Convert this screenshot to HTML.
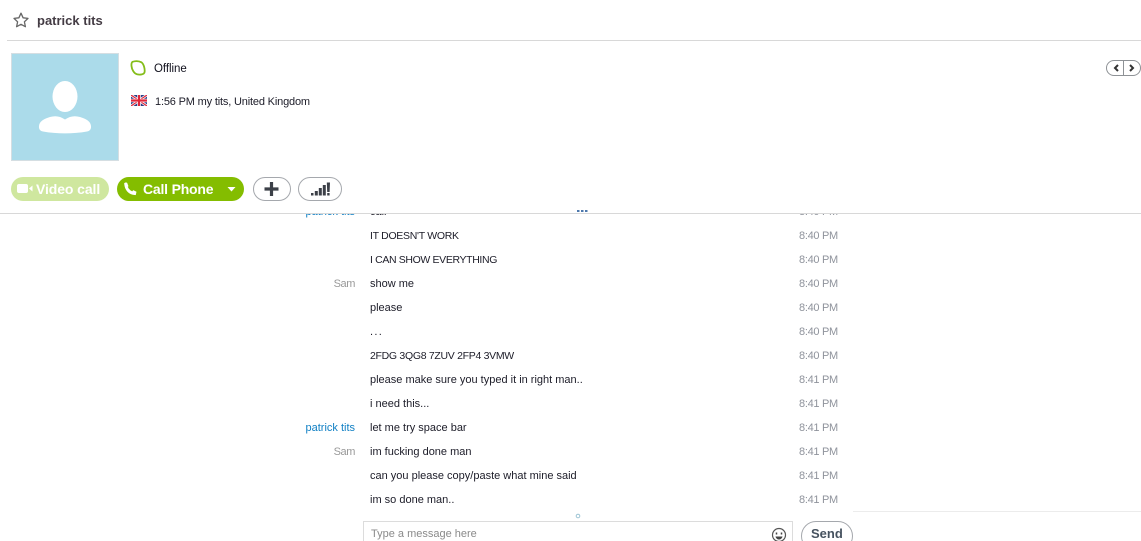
<!DOCTYPE html>
<html><head><meta charset="utf-8">
<style>
html,body{margin:0;padding:0;background:#fff;width:1141px;height:541px;overflow:hidden}
body{position:relative;font-family:"Liberation Sans",sans-serif;font-size:11px;color:#1a1a2a}
.a{position:absolute;white-space:nowrap}
.n{right:786px;text-align:right;color:#999;line-height:16px}
.n.b{color:#0f7fc4}
.s{letter-spacing:-.4px}
.m{left:370px;line-height:16px;color:#1c1c28}
.t{left:799px;line-height:16px;color:#8f939c;letter-spacing:-.3px}
.pill{position:absolute;box-sizing:border-box;height:24px;border-radius:12px;font-weight:bold;font-size:14px;line-height:24px;white-space:nowrap}
.o{border:1px solid #a5a8ad;background:#fff}
</style></head><body>
<svg class="a" style="left:13px;top:12px" width="16" height="16" viewBox="0 0 16 16"><path d="M8 1.200l2.100 4.600 4.900.6-3.600 3.400 1 4.900L8 12.300l-4.400 2.400 1-4.900L1 6.400l4.900-.6z" fill="none" stroke="#666" stroke-width="1.300" stroke-linejoin="round"/></svg>
<div class="a" style="left:37px;top:13px;font-size:13px;font-weight:bold;line-height:16px;color:#443c44">patrick tits</div>
<div class="a" style="left:7px;top:40px;width:1134px;height:1px;background:#d8d8d8"></div>

<div class="a" style="left:11px;top:53px;width:108px;height:108px;box-sizing:border-box;border:1px solid #d5dee2;background:#abdbea"></div>
<svg class="a" style="left:11px;top:53px" width="108" height="108" viewBox="0 0 108 108"><ellipse cx="54" cy="43.500" rx="12.500" ry="15.500" fill="#fff"/><path d="M28 73c.5-5 5-7 11-9 5-1.500 10-1 15 2.500 5-3.500 10-4 15-2.500 6 2 10.500 4 11 9 .3 3-1 5-4 5.500-14 2.500-30 2.500-44 0-3-.5-4.300-2.500-4-5.500z" fill="#fff"/></svg>

<svg class="a" style="left:130px;top:60px" width="16" height="16" viewBox="0 0 16 16"><path d="M2.500 1.800C5.500 .8 9 1 11.500 2.300 13.800 4 15 9 14.600 12 14.300 14.500 10 15 7 14.300 4 13.500 1.800 9.500 1.500 6 1.300 4 1.500 2.500 2.500 1.800z" fill="none" stroke="#84bd1a" stroke-width="1.800"/></svg>
<div class="a" style="left:154px;top:61px;line-height:16px;font-size:11.500px;color:#10101c;letter-spacing:-.05px">Offline</div>
<svg class="a" style="left:131px;top:95px" width="16" height="11" viewBox="0 0 16 11"><rect width="16" height="11" fill="#2b3f86"/><path d="M0 0L16 11M16 0L0 11" stroke="#fff" stroke-width="2.600"/><path d="M0 0L16 11M16 0L0 11" stroke="#e0263a" stroke-width="1.200"/><path d="M8 0V11M0 5.500H16" stroke="#fff" stroke-width="3.600"/><path d="M8 0V11M0 5.500H16" stroke="#e0263a" stroke-width="2.200"/></svg>
<div class="a" style="left:155px;top:94px;line-height:16px;font-size:11px;color:#1c1c28;letter-spacing:-.17px">1:56 PM my tits, United Kingdom</div>

<div class="a" style="left:1106px;top:60px;width:35px;height:16px;box-sizing:border-box;border:1px solid #8e9296;border-radius:8px;background:#fff"></div>
<div class="a" style="left:1123px;top:60px;width:1px;height:16px;background:#8e9296"></div>
<svg class="a" style="left:1106px;top:60px" width="35" height="16" viewBox="0 0 35 16"><path d="M12 5L9 8l3 3M24 5L27 8l-3 3" fill="none" stroke="#333" stroke-width="2"/></svg>

<div class="pill" style="left:11px;top:177px;width:98px;background:#cfe79f;color:#fff;padding-left:25px;letter-spacing:-.1px">Video call</div>
<svg class="a" style="left:17px;top:182px" width="16" height="13" viewBox="0 0 16 13"><rect x="0" y="2" width="11" height="9" rx="2" fill="#fff"/><path d="M12 6.500l3.500-3v6z" fill="#fff"/></svg>
<div class="pill" style="left:117px;top:177px;width:127px;background:#84bd00;color:#fff;padding-left:26px;letter-spacing:-.2px">Call Phone</div>
<svg class="a" style="left:123px;top:182px" width="14" height="14" viewBox="0 0 14 14"><path d="M2.800 2C3 7 6.500 11 11.500 11.500" fill="none" stroke="#fff" stroke-width="3" stroke-linecap="round"/><path d="M1 1.500L4 .6l1.500 3.600-2.500 1.500zM8.500 10.500l1.700-2.400 3.300 1.700-.8 3.400z" fill="#fff"/></svg>
<svg class="a" style="left:227px;top:187px" width="10" height="5" viewBox="0 0 10 5"><path d="M.5 0h8L4.500 4.500z" fill="#fff"/></svg>

<div class="a o" style="left:253px;top:177px;width:38px;height:24px;box-sizing:border-box;border-radius:12px"></div>
<svg class="a" style="left:264px;top:182px" width="15" height="14" viewBox="0 0 15 14"><path d="M7.500 0V14M.5 7H14.500" stroke="#3c4048" stroke-width="3.200"/></svg>
<div class="a o" style="left:298px;top:177px;width:44px;height:24px;box-sizing:border-box;border-radius:12px"></div>
<svg class="a" style="left:311px;top:182px" width="20" height="15" viewBox="0 0 20 15"><path d="M0 11h2.500v2.500H0zM3.800 9h3v4.500h-3zM7.800 6h3v7.500h-3zM11.800 3h3v10.500h-3z" fill="#3c4048"/><path d="M15.800 .5H19l-.4 9.500h-2.400zM16.200 11h2.400v2.500h-2.400z" fill="#3c4048"/></svg>

<div class="a" style="left:0;top:213px;width:1141px;height:1px;background:#d8d8d8"></div>
<div class="a" style="left:0;top:214px;width:1141px;height:4px;overflow:hidden">
<div class="a n b" style="top:-10px;right:786px">patrick tits</div>
<div class="a m" style="top:-10px">call</div>
<div class="a t" style="top:-10px">8:40 PM</div>
</div>
<svg class="a" style="left:577px;top:209px" width="11" height="4"><path d="M0 1h2.500v2H0zM4 1h2.500v2H4zM8 1h2.500v2H8z" fill="#4d78ad"/></svg>

<div class="a m" style="top:228px;font-size:10.500px;letter-spacing:-.3px">IT DOESN'T WORK</div><div class="a t" style="top:228px">8:40 PM</div>
<div class="a m" style="top:252px;font-size:10.500px;letter-spacing:-.36px">I CAN SHOW EVERYTHING</div><div class="a t" style="top:252px">8:40 PM</div>
<div class="a n s" style="top:276px">Sam</div><div class="a m" style="top:276px">show me</div><div class="a t" style="top:276px">8:40 PM</div>
<div class="a m" style="top:300px">please</div><div class="a t" style="top:300px">8:40 PM</div>
<div class="a m" style="top:324px;letter-spacing:1.300px">...</div><div class="a t" style="top:324px">8:40 PM</div>
<div class="a m" style="top:348px;font-size:10.500px;letter-spacing:-.3px">2FDG 3QG8 7ZUV 2FP4 3VMW</div><div class="a t" style="top:348px">8:40 PM</div>
<div class="a m" style="top:372px">please make sure you typed it in right man..</div><div class="a t" style="top:372px">8:41 PM</div>
<div class="a m" style="top:396px">i need this...</div><div class="a t" style="top:396px">8:41 PM</div>
<div class="a n b" style="top:420px">patrick tits</div><div class="a m" style="top:420px">let me try space bar</div><div class="a t" style="top:420px">8:41 PM</div>
<div class="a n s" style="top:444px">Sam</div><div class="a m" style="top:444px">im fucking done man</div><div class="a t" style="top:444px">8:41 PM</div>
<div class="a m" style="top:468px">can you please copy/paste what mine said</div><div class="a t" style="top:468px">8:41 PM</div>
<div class="a m" style="top:492px">im so done man..</div><div class="a t" style="top:492px">8:41 PM</div>

<svg class="a" style="left:575px;top:513px" width="6" height="6"><circle cx="3" cy="3" r="1.800" fill="none" stroke="#9cc4d4"/></svg>
<div class="a" style="left:853px;top:511px;width:288px;height:1px;background:#ececec"></div>
<div class="a" style="left:363px;top:521px;width:430px;height:30px;box-sizing:border-box;border:1px solid #dcdcdc"></div>
<div class="a" style="left:371px;top:526px;line-height:16px;color:#8a8a8a">Type a message here</div>
<svg class="a" style="left:771px;top:527px" width="16" height="14" viewBox="0 0 16 14"><circle cx="8" cy="8" r="6.500" fill="none" stroke="#555" stroke-width="1.200"/><path d="M5.500 5.500v2M10.500 5.500v2" stroke="#444" stroke-width="1.500"/><path d="M4.500 9.500h7c-.5 2-2 3-3.500 3s-3-1-3.500-3z" fill="#444"/></svg>
<div class="a o" style="left:801px;top:521px;width:52px;height:30px;box-sizing:border-box;border-radius:15px"></div>
<div class="a" style="left:811px;top:526px;font-weight:bold;font-size:13px;line-height:16px;color:#46525f">Send</div>
</body></html>
